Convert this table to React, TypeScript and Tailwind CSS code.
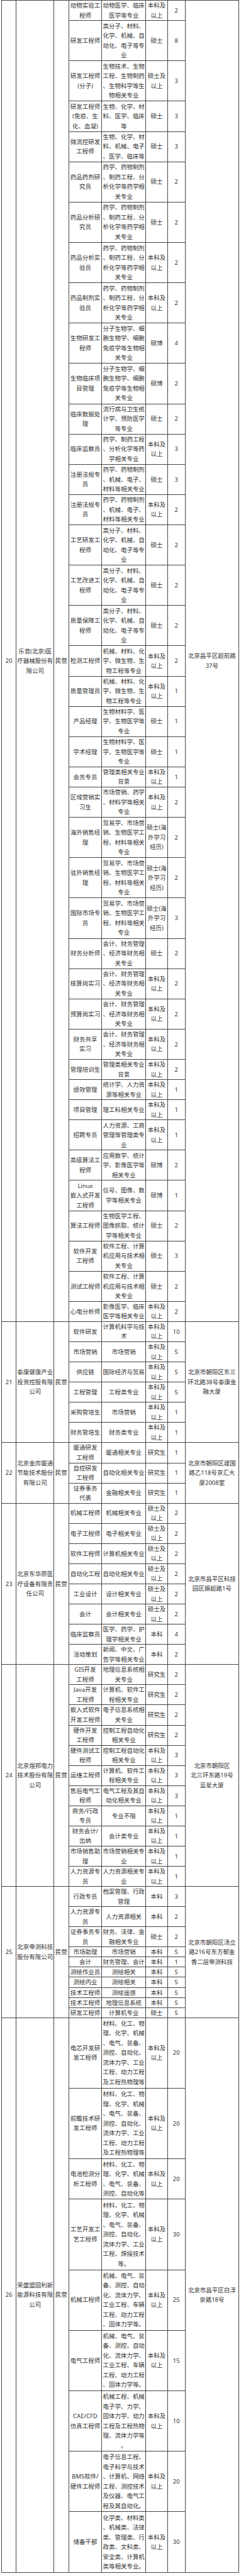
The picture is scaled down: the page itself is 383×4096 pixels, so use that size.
type Job = { p: string; m: string; d: string; n: string; h: number };
type Group = { no: string; co: string; kind: string; addr: string; jobs: Job[] };

const j = (p: string, m: string, d: string, n: string, h: number): Job => ({ p, m, d, n, h });

// majors that repeat across rows
const PHARMA = "药学、药物制剂|、制药工程、分|析化学等药学相|关专业";
const CELL = "分子生物学、细|胞生物学、细胞|免疫学等生物相|关专业";
const REG = "药学、药物制剂|、机械、电子、|材料等相关专业";
const POLY = "高分子、材料、|化学、机械、自|动化、电子等专|业";
const TEST = "机械、材料、化|学、微生物、生|物工程等专业";
const BIOMAT = "生物材料学、医|学、生物医学等|专业";
const TRADE = "贸易学、市场营|销、生物医学工|程、材料等相关|专业";
const OVERSEA = "硕士(海|外学习|经历)";
const FIN = "会计、财务管理|、经济等财务相|关专业";
const SOFT = "软件工程、计算|机应用与技术相|关专业";
const BK = "本科及|以上";
const SS = "硕士及|以上";
const BATT = "材料、化工、物|理、化学、机械|、电气、装备、|测控、自动化、|流体力学、工业|工程、动力工程|及工程热物理等";
const MECH = "机械、电气、装|备、测控、自动|化、流体力学、|工业工程、车辆|工程、动力工程|、固体力学等。";

const groups: Group[] = [
  {
    no: "20",
    co: "乐普(北京)医|疗器械股份有|限公司",
    kind: "民营",
    addr: "北京昌平区超前路|37号",
    jobs: [
      j("动物实验工|程师", "动物医学、临床|医学等专业", BK, "2", 2),
      j("研发工程师", POLY, "硕士", "8", 4),
      j("研发工程师|(分子)", "生物技术、生物|工程、生物制药|、生物科学等生|物相关专业", SS, "3", 4),
      j("研发工程师|(免疫、生|化、血凝)", "生物、化学、材|料、医学、临床|等", "硕士", "3", 3),
      j("微流控研发|工程师", "生物、化学、材|料、机械、电子|、医学、临床等", "硕士", "3", 3),
      j("药品药剂研|究员", PHARMA, "硕士", "2", 4),
      j("药品分析研|究员", PHARMA, "硕士", "2", 4),
      j("药品分析实|验员", PHARMA, BK, "2", 4),
      j("药品制剂实|验员", PHARMA, BK, "2", 4),
      j("生物研发工|程师", CELL, "硕博", "4", 4),
      j("生物临床项|目管理", CELL, "硕博", "2", 4),
      j("临床数据处|理", "流行病与卫生统|计学、预防医学|等专业", "硕士", "2", 3),
      j("临床监察员", "药学、制药工程|、分析化学等药|学相关专业", BK, "3", 3),
      j("注册法规专|员", REG, "硕士", "3", 3),
      j("注册法规专|员", REG, BK, "2", 3),
      j("工艺研发工|程师", POLY, "硕士", "2", 4),
      j("工艺改进工|程师", POLY, "硕士", "2", 4),
      j("质量保障工|程师", POLY, "硕士", "2", 4),
      j("检测工程师", TEST, BK, "2", 3),
      j("质量管理员", TEST, BK, "1", 3),
      j("产品经理", BIOMAT, "硕士", "1", 3),
      j("学术经理", BIOMAT, "硕士", "1", 3),
      j("会务专员", "管理类相关专业|背景", BK, "1", 2),
      j("区域营销实|习生", "市场营销、药学|、材料学等相关|专业", BK, "2", 3),
      j("海外销售经|理", TRADE, OVERSEA, "2", 4),
      j("驻外销售经|理", TRADE, OVERSEA, "2", 4),
      j("国际市场专|员", TRADE, OVERSEA, "3", 4),
      j("财务分析师", FIN, "硕士", "2", 3),
      j("核算岗实习", FIN, BK, "2", 3),
      j("预算岗实习", FIN, BK, "2", 3),
      j("财务共享|实习", FIN, BK, "2", 3),
      j("管理培训生", "管理类相关专业|背景", BK, "2", 2),
      j("绩效管理", "统计学、人力资|源等相关专业", BK, "1", 2),
      j("项目管理", "理工科相关专业", BK, "1", 2),
      j("招聘专员", "人力资源、工商|管理等管理类专|业", BK, "1", 3),
      j("高级算法工|程师", "应用数学、统计|学、影像医学等|相关专业", "硕博", "2", 3),
      j("Linux|嵌入式开发|工程师", "信号、图像、数|学等相关专业", "硕博", "1", 3),
      j("算法工程师", "生物医学工程、|图像抓取、统计|学等相关专业", "硕士", "2", 3),
      j("软件开发|工程师", SOFT, "硕士", "3", 3),
      j("测试工程师", SOFT, "硕士", "2", 3),
      j("心电分析师", "影像医学、临床|医学等相关专业", BK, "2", 2),
    ],
  },
  {
    no: "21",
    co: "泰康健康产业|投资控股有限|公司",
    kind: "民营",
    addr: "北京市朝阳区东三|环北路38号泰康金|融大厦",
    jobs: [
      j("软件研发", "计算机科学与技|术", BK, "10", 2),
      j("市场营销", "市场营销", BK, "5", 2),
      j("供应链", "国际经济与贸易", BK, "5", 2),
      j("工程管理", "工程类专业", BK, "5", 2),
      j("采购管培生", "市场营销", BK, "1", 2),
      j("财务管培生", "财务类专业", BK, "1", 2),
    ],
  },
  {
    no: "22",
    co: "北京金房暖通|节能技术股份|有限公司",
    kind: "民营",
    addr: "北京市朝阳区建国|路乙118号京汇大|厦2008室",
    jobs: [
      j("暖通研发|工程师", "暖通相关专业", "研究生", "1", 2),
      j("自控研发|工程师", "自动化相关专业", "研究生", "1", 2),
      j("证券事务|代表", "金融相关专业", "研究生", "1", 2),
    ],
  },
  {
    no: "23",
    co: "北京东华原医|疗设备有限责|任公司",
    kind: "民营",
    addr: "北京市昌平区科技|园区振超路1号",
    jobs: [
      j("机械工程师", "机械相关专业", SS, "2", 2),
      j("电子工程师", "电子相关专业", SS, "2", 2),
      j("软件工程师", "计算机相关专业", SS, "2", 2),
      j("自动化工程", "自动化相关专业", SS, "2", 2),
      j("工业设计", "设计相关专业", SS, "2", 2),
      j("会计", "会计相关专业", SS, "2", 2),
      j("临床监察员", "医学、药学、护|理学相关专业", "本科", "4", 2),
      j("活动策划", "新闻、中文、广|告学等相关专业", "本科", "2", 2),
    ],
  },
  {
    no: "24",
    co: "北京煜邦电力|技术股份有限|公司",
    kind: "民营",
    addr: "北京市朝阳区|北三环东路19号|蓝星大厦",
    jobs: [
      j("GIS开发|工程师", "地理信息系统相|关专业", "研究生", "2", 2),
      j("Java开发|工程师", "计算机、软件工|程相关专业", "研究生", "2", 2),
      j("嵌入式软件|开发工程师", "电子信息系统相|关专业", "研究生", "2", 2),
      j("硬件开发|工程师", "控制工程自动化|相关专业", "研究生", "2", 2),
      j("硬件测试工|程师", "控制工程自动化|相关专业", BK, "3", 2),
      j("运维工程师", "计算机、软件工|程相关专业", BK, "3", 2),
      j("售后电气工|程师", "电气工程及其自|动化相关专业", BK, "3", 2),
      j("商务/行政|专员", "专业不限", BK, "1", 2),
      j("财务会计/|出纳", "会计类专业", BK, "1", 2),
      j("市场销售助|理", "市场营销相关专|业", BK, "1", 2),
      j("人力资源专|员", "人力资源相关专|业", BK, "1", 2),
    ],
  },
  {
    no: "25",
    co: "北京帝测科技|股份有限公司",
    kind: "民营",
    addr: "北京市朝阳区汤立|路216号东方郁金|香二层帝测科技",
    jobs: [
      j("行政专员", "档案管理、行政|管理", "本科", "3", 2),
      j("人力资源专|员", "人力资源相关", "本科", "2", 2),
      j("证券事务专|员", "财务、法律、金|融相关专业", "硕士", "2", 2),
      j("市场助理", "市场营销", "本科", "5", 1),
      j("会计", "财务管理、会计", "本科", "1", 1),
      j("测绘作业员", "测绘相关", "本科", "5", 1),
      j("测绘内业", "测绘相关", "本科", "5", 1),
      j("技术工程师", "测绘遥感", "本科", "5", 1),
      j("技术工程师", "地理信息系统", "本科", "5", 1),
      j("研发工程师", "计算机专业", "硕士", "5", 1),
    ],
  },
  {
    no: "26",
    co: "荣盛盟固利新|能源科技有限|公司",
    kind: "民营",
    addr: "北京市昌平区白浮|泉路18号",
    jobs: [
      j("电芯开发研|发工程师", BATT, BK, "20", 7),
      j("前瞻技术研|发工程师", BATT, BK, "20", 7),
      j("电池检测分|析工程师", "材料、化工、物|理、化学、机械|、电气、装备、|测控、自动化等", BK, "20", 4),
      j("工艺开发工|艺工程师", "材料、化工、物|理、化学、机械|、电气、装备、|测控、自动化、|流体力学、工业|工程、焊接技术|等。", BK, "30", 7),
      j("机械工程师", MECH, BK, "25", 6),
      j("电气工程师", MECH, BK, "15", 6),
      j("CAE/CFD|仿真工程师", "机械工程、机械|电子学、力学、|固体力学、动力|工程及工程热物|理、流体力学等|。", BK, "10", 6),
      j("BMS软件/|硬件工程师", "电子信息工程、|电子科学与技术|、计算机、网络|工程、测控技术|及仪器、电气工|程及其自动化。", BK, "20", 6),
      j("储备干部", "化学类、材料类|、机械类、法律|类、管理类、行|政类、文科类、|安全类、计算机|类等相关专业。", BK, "30", 6),
    ],
  },
];

// one text line of the source table is 22px, i.e. 16.04px here
const rowH: Record<number, string> = {
  1: "h-[16.04px] leading-[15px]",
  2: "h-[32.08px]",
  3: "h-[48.12px]",
  4: "h-[64.16px]",
  6: "h-[96.24px]",
  7: "h-[112.28px]",
};

const cell = "border border-[#454545] p-0 text-center align-middle whitespace-nowrap";

function Lines({ text }: { text: string }) {
  return (
    <>
      {text.split("|").map((t, i) => (
        <span key={i} className="block">
          {t}
        </span>
      ))}
    </>
  );
}

export default function App() {
  return (
    <div className="w-[383px] bg-white">
      <table className="ml-[2px] w-[377px] table-fixed border-collapse font-['Noto_Sans','Noto_Sans_CJK_SC',sans-serif] text-[9.48px] leading-[15.5px] text-[#333]">
        <colgroup>
          <col className="w-[23.3px]" />
          <col className="w-[59.8px]" />
          <col className="w-[23.5px]" />
          <col className="w-[52.7px]" />
          <col className="w-[69.8px]" />
          <col className="w-[34.8px]" />
          <col className="w-[27.7px]" />
          <col className="w-[85.5px]" />
        </colgroup>
        <tbody>
          {groups.map((g) =>
            g.jobs.map((job, i) => (
              <tr key={g.no + "-" + i} className={rowH[job.h]}>
                {i === 0 && (
                  <>
                    <td rowSpan={g.jobs.length} className={cell}>
                      {g.no}
                    </td>
                    <td rowSpan={g.jobs.length} className={cell}>
                      <Lines text={g.co} />
                    </td>
                    <td rowSpan={g.jobs.length} className={cell}>
                      {g.kind}
                    </td>
                  </>
                )}
                <td className={cell}>
                  <Lines text={job.p} />
                </td>
                <td className={cell}>
                  <Lines text={job.m} />
                </td>
                <td className={cell}>
                  <Lines text={job.d} />
                </td>
                <td className={cell}>{job.n}</td>
                {i === 0 && (
                  <td rowSpan={g.jobs.length} className={cell}>
                    <Lines text={g.addr} />
                  </td>
                )}
              </tr>
            ))
          )}
        </tbody>
      </table>
    </div>
  );
}
